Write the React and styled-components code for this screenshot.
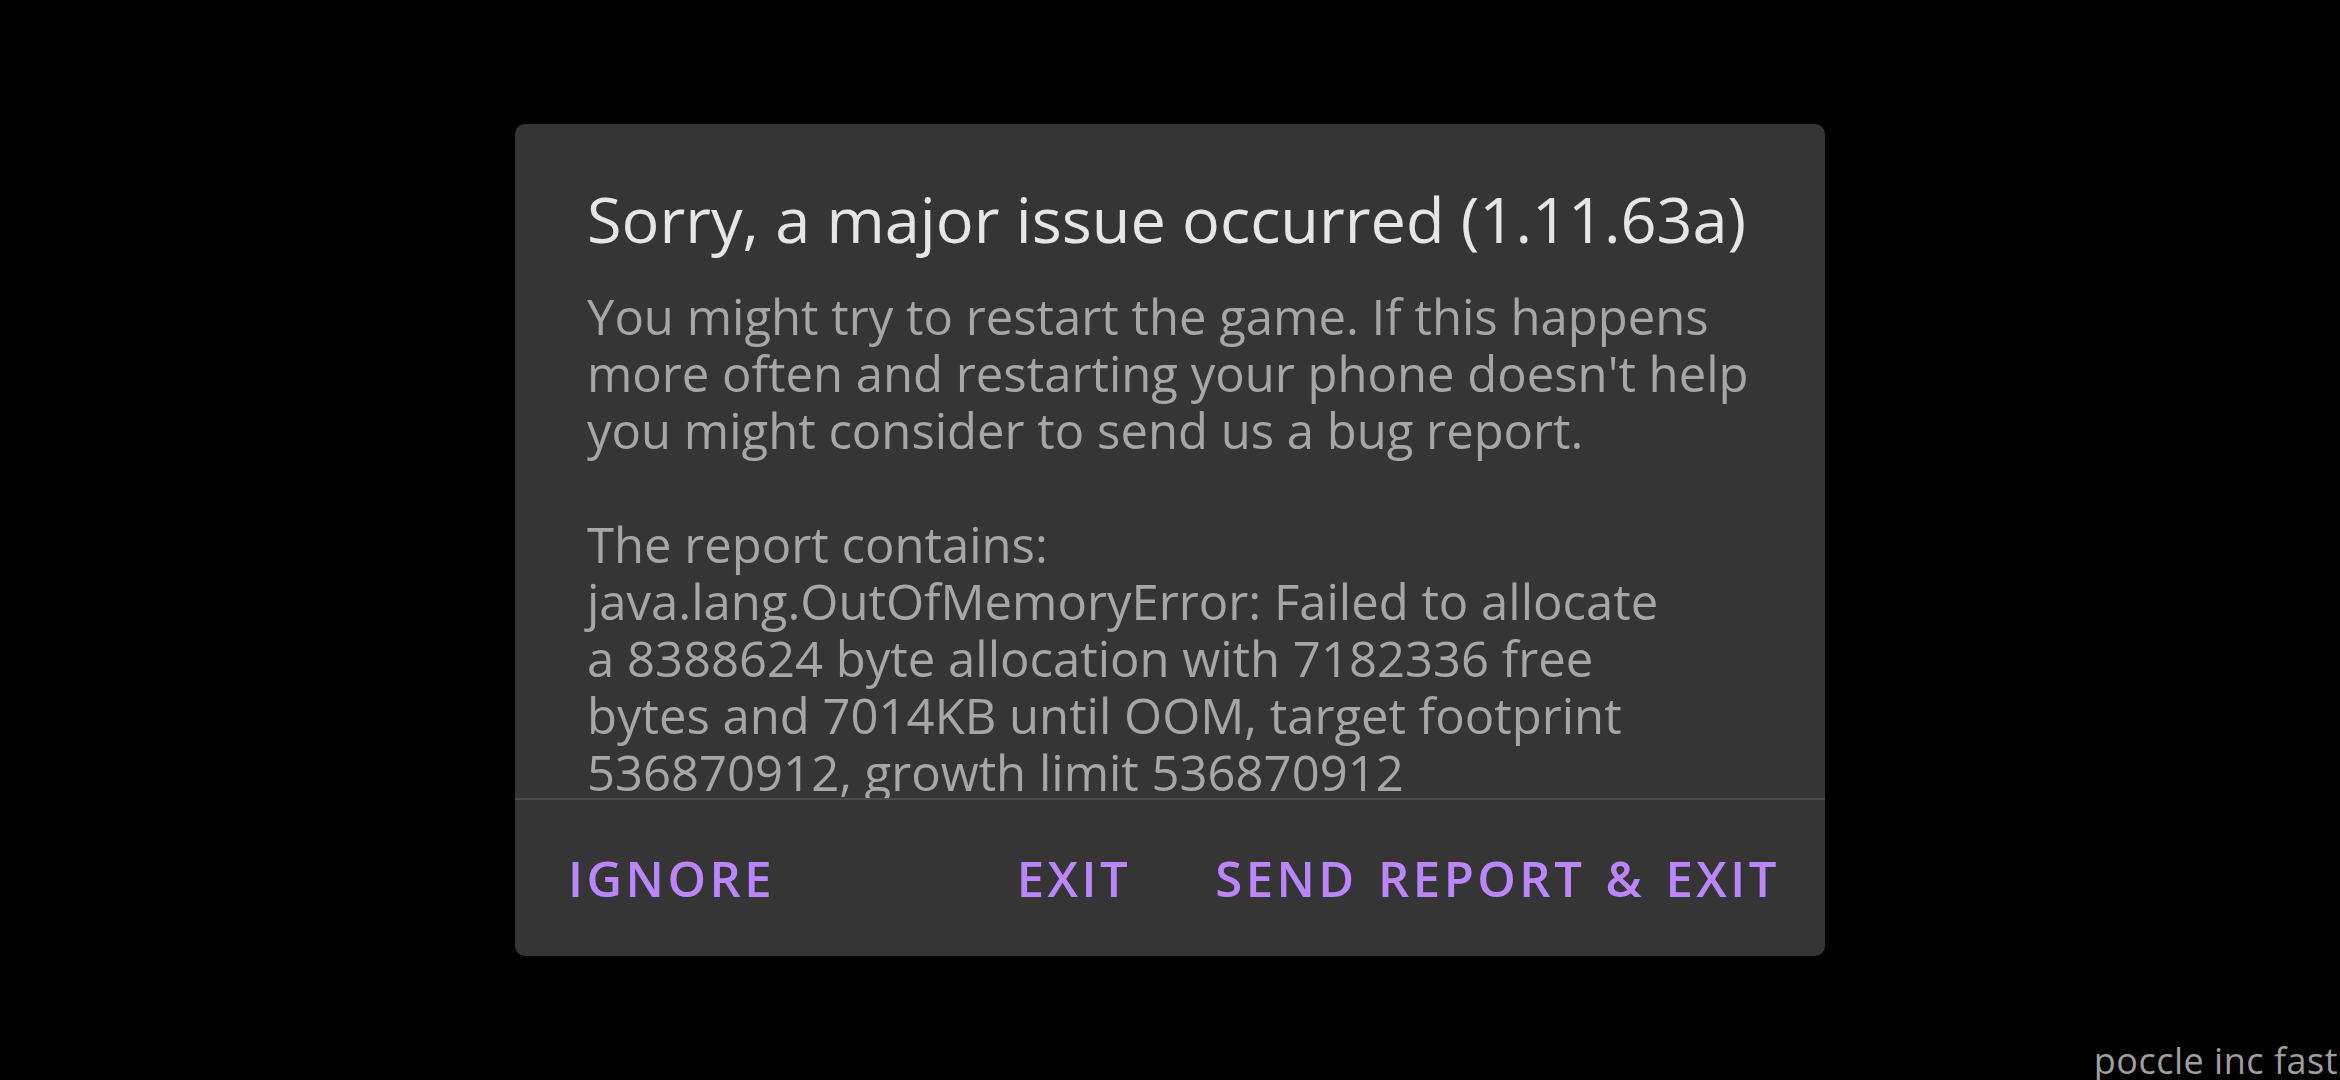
import React from 'react'
import styled, { createGlobalStyle } from 'styled-components'

const GlobalStyle = createGlobalStyle`
    html, body {
        margin: 0;
        padding: 0;
        background: #000;
    }
    body {
        font-family: 'Open Sans', 'Noto Sans', sans-serif;
    }
`

const Screen = styled.div`
    position: relative;
    width: 2340px;
    height: 1080px;
    overflow: hidden;
    background: #000;
    display: flex;
    align-items: center;
    justify-content: center;
`

const Dialog = styled.div`
    width: 1310px;
    height: 832px;
    background: #353535;
    border-radius: 10px;
    display: flex;
    flex-direction: column;
    overflow: hidden;
`

const Content = styled.div`
    height: 674px;
    flex-shrink: 0;
    overflow: hidden;
    box-sizing: border-box;
    padding: 55px 60px 0 72px;
`

const Title = styled.h1`
    margin: 0 0 29px 0;
    font-size: 63px;
    line-height: 80px;
    font-weight: 400;
    color: #e6e6e6;
    white-space: nowrap;
`

const Message = styled.p`
    margin: 0;
    font-size: 49px;
    line-height: 57px;
    color: #a6a6a6;
    white-space: pre-line;
`

const Divider = styled.div`
    height: 2px;
    flex-shrink: 0;
    background: #4d4d4d;
`

const ButtonBar = styled.div`
    flex: 1;
    display: flex;
    align-items: center;
    padding: 0 45px 0 53px;
`

const Spacer = styled.div`
    flex: 1;
`

const Button = styled.button`
    background: none;
    border: none;
    padding: 0;
    margin-left: ${props => (props.gap ? props.gap : '0')};
    font-family: 'Open Sans', 'Noto Sans', sans-serif;
    font-size: 49px;
    font-weight: 600;
    letter-spacing: 3.5px;
    word-spacing: 4px;
    text-transform: uppercase;
    color: #bb86fc;
    cursor: pointer;
`

const Watermark = styled.div`
    position: absolute;
    right: 2px;
    bottom: 1px;
    font-size: 36px;
    line-height: 36px;
    letter-spacing: 0.5px;
    color: #9e9e9e;
`

const message = `You might try to restart the game. If this happens
more often and restarting your phone doesn't help
you might consider to send us a bug report.

The report contains:
java.lang.OutOfMemoryError: Failed to allocate
a 8388624 byte allocation with 7182336 free
bytes and 7014KB until OOM, target footprint
536870912, growth limit 536870912`

const App = () => (
    <>
        <GlobalStyle />
        <Screen>
            <Dialog>
                <Content>
                    <Title>Sorry, a major issue occurred (1.11.63a)</Title>
                    <Message>{message}</Message>
                </Content>
                <Divider />
                <ButtonBar>
                    <Button>Ignore</Button>
                    <Spacer />
                    <Button>Exit</Button>
                    <Button gap="84px">Send report &amp; exit</Button>
                </ButtonBar>
            </Dialog>
            <Watermark>poccle inc fast</Watermark>
        </Screen>
    </>
)

export default App
